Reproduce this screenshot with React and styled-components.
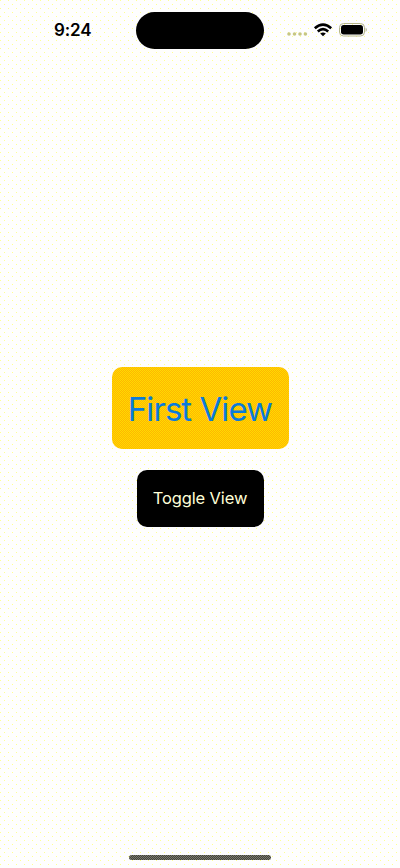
import React from 'react';
import styled, { createGlobalStyle } from 'styled-components';

const GlobalStyle = createGlobalStyle`
  * { box-sizing: border-box; }
  body { margin: 0; }
`;

const Screen = styled.div`
  height: 868px;
  display: flex;
  flex-direction: column;
  overflow: hidden;
  font-family: Inter, sans-serif;
  background-color: #fefefe;
  background-image: conic-gradient(from 270deg at 1px 1px, #ffff92 25%, transparent 0),
    conic-gradient(from 270deg at 1px 1px, #ffff92 25%, transparent 0);
  background-size: 8px 8px;
  background-position: 0 0, 4px 4px;
`;

const StatusBar = styled.header`
  height: 60px;
  padding-top: 11px;
  display: grid;
  grid-template-columns: 136px 128px 136px;
  flex: none;
`;

const Time = styled.time`
  padding-left: 54px;
  font-size: 17px;
  font-weight: 600;
  line-height: 38px;
  letter-spacing: -0.15px;
  color: #000;
`;

const Island = styled.div`
  height: 37px;
  margin-top: 1px;
  border-radius: 19px;
  background: #000;
`;

const StatusIcons = styled.div`
  height: 38px;
  padding-left: 22px;
  display: flex;
  align-items: center;

  svg { display: block; flex: none; }
`;

const Content = styled.main`
  flex: 1;
  padding-top: 307px;
  display: flex;
  flex-direction: column;
  align-items: center;
  gap: 21px;
`;

const ViewCard = styled.div`
  width: 177px;
  height: 82px;
  padding-top: 2px;
  display: flex;
  align-items: center;
  justify-content: center;
  border-radius: 10px;
  background: repeating-conic-gradient(#ffdb00 0 25%, #ffb600 0 50%) 0 0 / 2px 2px;
  color: #0a7bdc;
  white-space: nowrap;
`;

const ViewTitle = styled.span`
  font-size: 33px;
  line-height: 40px;
  letter-spacing: -0.95px;
`;

const ToggleButton = styled.button`
  width: 127px;
  height: 57px;
  padding: 0 0 2px;
  border: 0;
  border-radius: 10px;
  background: #000;
  color: #ffffd8;
  font: 400 16.5px/20px Inter, sans-serif;
  letter-spacing: -0.13px;
  white-space: nowrap;
`;

const HomeIndicator = styled.div`
  width: 142px;
  height: 5px;
  margin: 0 auto 8px;
  flex: none;
  border-radius: 3px;
  background: repeating-conic-gradient(#404040 0 25%, #7c7c68 0 50%) 0 0 / 2px 2px;
`;

const SignalDots = () => (
  <svg width="22" height="12" viewBox="0 0 22 12" fill="#c6c684">
    <circle cx="3" cy="10" r="1.8" />
    <circle cx="8.5" cy="10" r="1.8" />
    <circle cx="14" cy="10" r="1.8" />
    <circle cx="19.4" cy="10" r="1.8" />
  </svg>
);

const Wifi = () => (
  <svg width="29" height="14" viewBox="0 0 29 14" fill="none" stroke="#000" strokeWidth="2.6">
    <path d="M6.8 5.3Q15 -1.9 23.2 5.3" />
    <path d="M9.8 8.5Q15 3.8 20.2 8.5" />
    <path d="M12.2 10.5Q15 8.3 17.8 10.5L15 13.2Z" fill="#000" stroke="none" />
  </svg>
);

const Battery = () => (
  <svg width="30" height="14" viewBox="0 0 30 14">
    <rect x="2.5" y=".5" width="25" height="12.5" rx="4" fill="none" stroke="#b4b48a" />
    <rect x="4" y="2" width="22" height="9.5" rx="2.7" fill="#000" />
    <path d="M28.6 4.5Q31 6.7 28.6 9Z" fill="#b4b48a" />
  </svg>
);

export default function App() {
  return (
    <>
      <GlobalStyle />
      <Screen>
        <StatusBar>
          <Time>9:24</Time>
          <Island />
          <StatusIcons>
            <SignalDots />
            <Wifi />
            <Battery />
          </StatusIcons>
        </StatusBar>
        <Content>
          <ViewCard>
            <ViewTitle>First View</ViewTitle>
          </ViewCard>
          <ToggleButton type="button">Toggle View</ToggleButton>
        </Content>
        <HomeIndicator />
      </Screen>
    </>
  );
}
